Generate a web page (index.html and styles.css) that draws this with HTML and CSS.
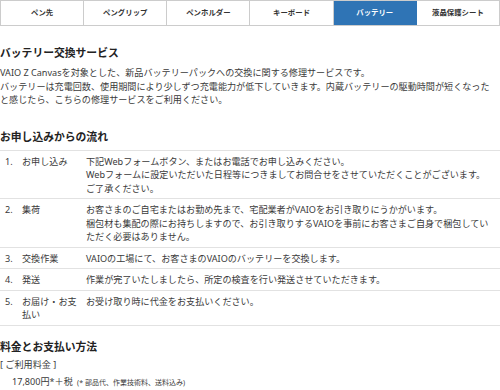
FILE: index.html
```html
<!DOCTYPE html>
<html lang="ja">
<head>
<meta charset="utf-8">
<link rel="stylesheet" href="styles.css">
</head>
<body>
<nav class="tabs">
  <a class="tab">ペン先</a>
  <a class="tab">ペングリップ</a>
  <a class="tab">ペンホルダー</a>
  <a class="tab">キーボード</a>
  <a class="tab active">バッテリー</a>
  <a class="tab">液晶保護シート</a>
</nav>
<main class="content">
  <h2 class="h first">バッテリー交換サービス</h2>
  <p class="lead">VAIO Z Canvasを対象とした、新品バッテリーパックへの交換に関する修理サービスです。<br>バッテリーは充電回数、使用期間により少しずつ充電能力が低下していきます。内蔵バッテリーの駆動時間が短くなったと感じたら、こちらの修理サービスをご利用ください。</p>

  <h2 class="h second">お申し込みからの流れ</h2>
  <ol class="flow">
    <li class="row"><span class="num">1.</span><span class="name">お申し込み</span><span class="desc">下記Webフォームボタン、またはお電話でお申し込みください。<br>Webフォームに設定いただいた日程等につきましてお問合せをさせていただくことがございます。<span class="nw">ご了承ください。</span></span></li>
    <li class="row"><span class="num">2.</span><span class="name">集荷</span><span class="desc">お客さまのご自宅またはお勤め先まで、宅配業者がVAIOをお引き取りにうかがいます。<br>梱包材も集配の際にお持ちしますので、お引き取りするVAIOを事前にお客さまご自身で梱包していただく必要はありません。</span></li>
    <li class="row"><span class="num">3.</span><span class="name">交換作業</span><span class="desc">VAIOの工場にて、お客さまのVAIOのバッテリーを交換します。</span></li>
    <li class="row"><span class="num">4.</span><span class="name">発送</span><span class="desc">作業が完了いたしましたら、所定の検査を行い発送させていただきます。</span></li>
    <li class="row"><span class="num">5.</span><span class="name">お届け・お支払い</span><span class="desc">お受け取り時に代金をお支払いください。</span></li>
  </ol>

  <h2 class="h third">料金とお支払い方法</h2>
  <p class="label">[ ご利用料金 ]</p>
  <p class="price">17,800円*＋税 <small class="note">(* 部品代、作業技術料、送料込み)</small></p>
</main>
</body>
</html>
```
FILE: styles.css
```css
html, body {
  margin: 0;
  padding: 0;
  background: #fff;
}
body {
  font-family: "Noto Sans", "Noto Sans CJK JP", sans-serif;
  color: #3a3a3a;
  font-size: 9.1px;
  line-height: 13.5px;
  width: 500px;
  overflow: hidden;
}
.tabs {
  display: grid;
  grid-template-columns: repeat(6, 1fr);
  height: 26px;
  box-sizing: border-box;
  border-top: 1px solid #ccc;
  border-bottom: 1px solid #ccc;
  border-left: 1px solid #ccc;
}
.tab {
  display: flex;
  align-items: center;
  justify-content: center;
  font-size: 7.4px;
  font-weight: bold;
  color: #333;
  border-right: 1px solid #ccc;
}
.tab.active {
  background: #2f74b5;
  color: #fff;
  border-right-color: #2f74b5;
}
.content {
  padding: 0;
}
.h {
  font-size: 10.8px;
  line-height: 16px;
  font-weight: bold;
  margin: 0;
  color: #222;
}
.h.first { margin-top: 19px; }
.h.second { margin-top: 22px; }
.h.third { margin-top: 13px; }
.lead {
  margin: 5px 0 0;
  padding-right: 5px;
}
.flow {
  list-style: none;
  margin: 5px 0 0;
  padding: 0;
  border-top: 1px solid #e2e2e2;
}
.row {
  display: grid;
  grid-template-columns: 22px 64px 1fr;
  padding: 4px 0 3px;
  border-bottom: 1px solid #e2e2e2;
}
.num {
  padding-left: 5px;
}
.name {
  padding-right: 7px;
  min-width: 0;
}
.desc {
  padding-right: 4px;
  min-width: 0;
}
.nw {
  white-space: nowrap;
}
.label {
  margin: 3px 0 0;
}
.price {
  margin: 4px 0 0;
  padding-left: 12px;
}
.note {
  font-size: 7px;
  margin-left: 2px;
}
```
